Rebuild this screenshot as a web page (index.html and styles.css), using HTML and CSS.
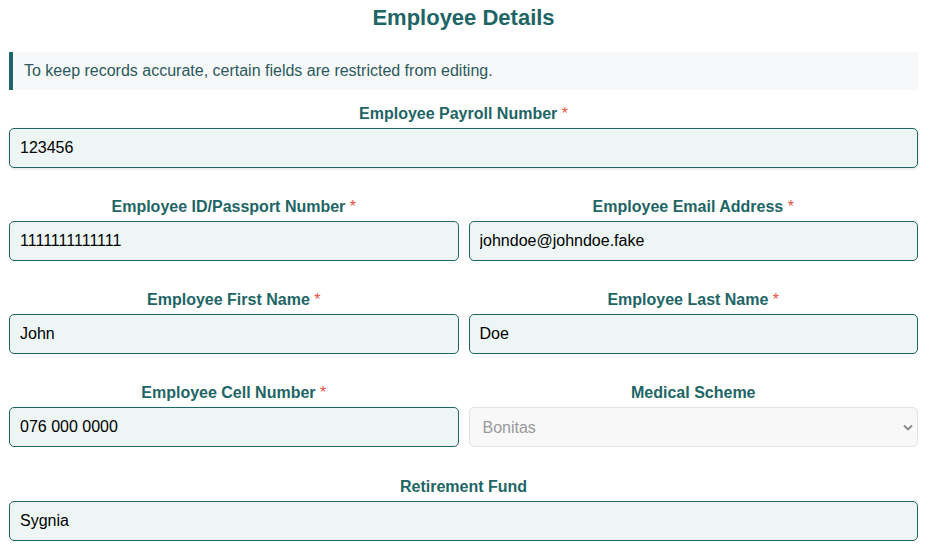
FILE: index.html
```html
<!DOCTYPE html>
<html>
<head>
<meta charset="utf-8">
<link rel="stylesheet" href="styles.css">
</head>
<body>
<div class="page">
  <h2 class="title">Employee Details</h2>
  <div class="notice">To keep records accurate, certain fields are restricted from editing.</div>
  <div class="field">
    <label class="label">Employee Payroll Number <span class="req">*</span></label>
    <input class="input shadow" type="text" value="123456">
  </div>
  <div class="row">
    <div class="field">
      <label class="label">Employee ID/Passport Number <span class="req">*</span></label>
      <input class="input" type="text" value="1111111111111">
    </div>
    <div class="field">
      <label class="label">Employee Email Address <span class="req">*</span></label>
      <input class="input" type="text" value="johndoe@johndoe.fake">
    </div>
  </div>
  <div class="row">
    <div class="field">
      <label class="label">Employee First Name <span class="req">*</span></label>
      <input class="input" type="text" value="John">
    </div>
    <div class="field">
      <label class="label">Employee Last Name <span class="req">*</span></label>
      <input class="input" type="text" value="Doe">
    </div>
  </div>
  <div class="row row-last">
    <div class="field">
      <label class="label">Employee Cell Number <span class="req">*</span></label>
      <input class="input" type="text" value="076 000 0000">
    </div>
    <div class="field">
      <label class="label">Medical Scheme</label>
      <select class="select" disabled><option>Bonitas</option></select>
    </div>
  </div>
  <div class="field">
    <label class="label">Retirement Fund</label>
    <input class="input" type="text" value="Sygnia">
  </div>
</div>
</body>
</html>
```
FILE: styles.css
```css
* { box-sizing: border-box; }
html, body { margin: 0; padding: 0; background: #fff; }
body { font-family: "Liberation Sans", Arial, sans-serif; }
.page { padding: 0 13px 0 9px; }
.title {
  margin: 0;
  padding-top: 5px;
  height: 52px;
  text-align: center;
  font-size: 22px;
  line-height: 26px;
  font-weight: bold;
  color: #1e6566;
}
.notice {
  height: 38px;
  background: #f6f8f9;
  border-left: 4px solid #1e6566;
  padding-left: 11px;
  font-size: 16px;
  line-height: 38px;
  color: #2c5a5c;
  margin-bottom: 13px;
}
.row { display: flex; gap: 10px; }
.row .field { flex: 1 1 0; min-width: 0; }
.row-last .field { margin-bottom: 29px; }
.field { display: flex; flex-direction: column; margin-bottom: 28px; }
.label {
  display: block;
  text-align: center;
  font-size: 16px;
  font-weight: bold;
  line-height: 20px;
  color: #1e6566;
  margin-top: 1px;
  margin-bottom: 4px;
}
.req { color: #e5533d; font-weight: normal; }
.input {
  display: block;
  width: 100%;
  height: 40px;
  border: 1px solid #1e6566;
  border-radius: 5px;
  background: #eef6f5;
  padding: 0 10px;
  font-family: "Liberation Sans", Arial, sans-serif;
  font-size: 16px;
  color: #000;
  outline: none;
}
.shadow { box-shadow: 0 1px 3px rgba(0,0,0,0.12); }
.select {
  display: block;
  width: 100%;
  height: 40px;
  border: 1px solid #e3e3e3;
  border-radius: 5px;
  background-color: #f8f8f8;
  background-image: url("data:image/svg+xml,%3Csvg xmlns='http://www.w3.org/2000/svg' width='10' height='7' viewBox='0 0 10 7'%3E%3Cpath d='M1 1.5l4 4 4-4' fill='none' stroke='%23888' stroke-width='1.8'/%3E%3C/svg%3E");
  background-repeat: no-repeat;
  background-position: right 4px center;
  -webkit-appearance: none;
  appearance: none;
  padding: 0 13px;
  font-family: "Liberation Sans", Arial, sans-serif;
  font-size: 16px;
  color: #9a9a9a;
  opacity: 1;
}
```
